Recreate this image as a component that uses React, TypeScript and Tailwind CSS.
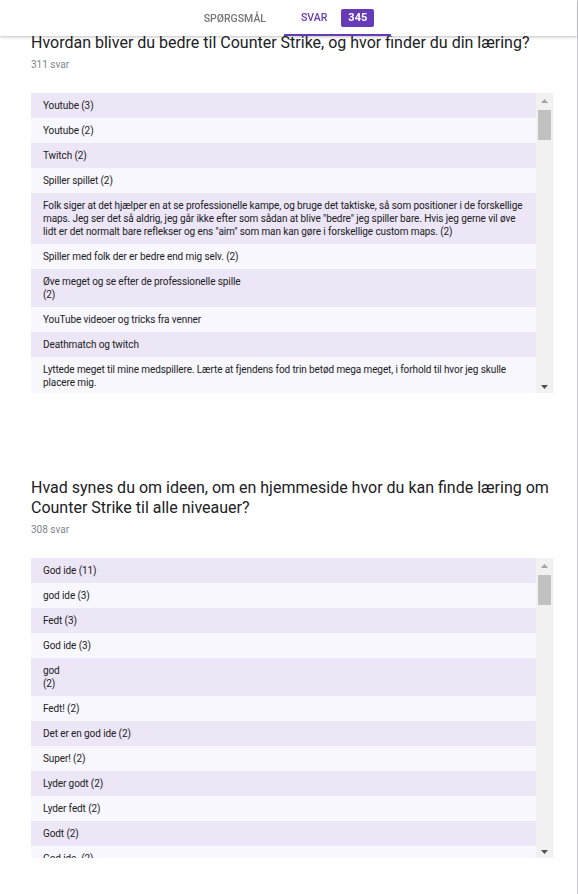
import React from 'react';

const firstAnswers = [
  'Youtube (3)',
  'Youtube (2)',
  'Twitch (2)',
  'Spiller spillet (2)',
  'Folk siger at det hjælper en at se professionelle kampe, og bruge det taktiske, så som positioner i de forskellige maps. Jeg ser det så aldrig, jeg går ikke efter som sådan at blive "bedre" jeg spiller bare. Hvis jeg gerne vil øve lidt er det normalt bare reflekser og ens "aim" som man kan gøre i forskellige custom maps. (2)',
  'Spiller med folk der er bedre end mig selv. (2)',
  'Øve meget og se efter de professionelle spille\n(2)',
  'YouTube videoer og tricks fra venner',
  'Deathmatch og twitch',
  'Lyttede meget til mine medspillere. Lærte at fjendens fod trin betød mega meget, i forhold til hvor jeg skulle placere mig.',
];

const secondAnswers = [
  'God ide (11)',
  'god ide (3)',
  'Fedt (3)',
  'God ide (3)',
  'god\n(2)',
  'Fedt! (2)',
  'Det er en god ide (2)',
  'Super! (2)',
  'Lyder godt (2)',
  'Lyder fedt (2)',
  'Godt (2)',
  'God ide. (2)',
];

const Scrollbar = () => (
  <div className="w-[17px] shrink-0 bg-[#f1f1f1] flex flex-col items-center">
    <svg width="17" height="14" viewBox="0 0 17 14" className="shrink-0">
      <path d="M5 10 L8.5 6 L12 10 Z" fill="#a3a3a3" />
    </svg>
    <div className="w-[13px] h-[30px] bg-[#c1c1c1] mt-[3px]" />
    <div className="flex-1" />
    <svg width="17" height="14" viewBox="0 0 17 14" className="shrink-0">
      <path d="M5 6 L12 6 L8.5 10 Z" fill="#505050" />
    </svg>
  </div>
);

const AnswerList = ({ answers }: { answers: string[] }) => (
  <div className="flex h-[300px]">
    <div className="flex-1 overflow-hidden">
      {answers.map((a, i) => (
        <div
          key={i}
          className={`${i % 2 === 0 ? 'bg-[#ece6f6]' : 'bg-[#f8f7fd]'} pl-3 pr-[10px] py-[6px] text-[10px] leading-[13px] tracking-[-0.1px] text-[#202124] whitespace-pre-line`}
        >
          {a}
        </div>
      ))}
    </div>
    <Scrollbar />
  </div>
);

const Question = ({ title, count, answers }: { title: string; count: string; answers: string[] }) => (
  <section>
    <h2 className="text-[16px] leading-[20px] text-[#202124] font-normal">{title}</h2>
    <div className="mt-[5px] text-[10px] leading-[14px] text-[#80868b]">{count}</div>
    <div className="mt-[21px]">
      <AnswerList answers={answers} />
    </div>
  </section>
);

const App = () => {
  return (
    <div className="relative min-h-[894px] bg-white border-r border-[#cdc9d6] font-['Roboto',sans-serif] overflow-hidden">
      <header className="fixed top-0 left-0 right-[1px] h-9 bg-white shadow-[0_1px_3px_rgba(0,0,0,0.25)] z-10 flex justify-center">
        <div className="h-full flex items-center px-[18px] pt-[2px] text-[10.5px] font-medium text-[#757575]">
          SPØRGSMÅL
        </div>
        <div className="h-full flex items-center px-[17px] border-b-2 border-[#673ab7] pt-[2px]">
          <span className="text-[10.5px] font-medium text-[#673ab7]">SVAR</span>
          <span className="ml-[14px] h-[18px] px-[7px] rounded-[2px] bg-[#673ab7] text-white text-[11px] font-bold flex items-center">
            345
          </span>
        </div>
      </header>

      <main className="pt-[33px] pl-[31px] pr-[24px] pb-9">
        <Question
          title="Hvordan bliver du bedre til Counter Strike, og hvor finder du din læring?"
          count="311 svar"
          answers={firstAnswers}
        />
        <div className="mt-[85px]">
          <Question
            title="Hvad synes du om ideen, om en hjemmeside hvor du kan finde læring om Counter Strike til alle niveauer?"
            count="308 svar"
            answers={secondAnswers}
          />
        </div>
      </main>
    </div>
  );
};

export default App;
